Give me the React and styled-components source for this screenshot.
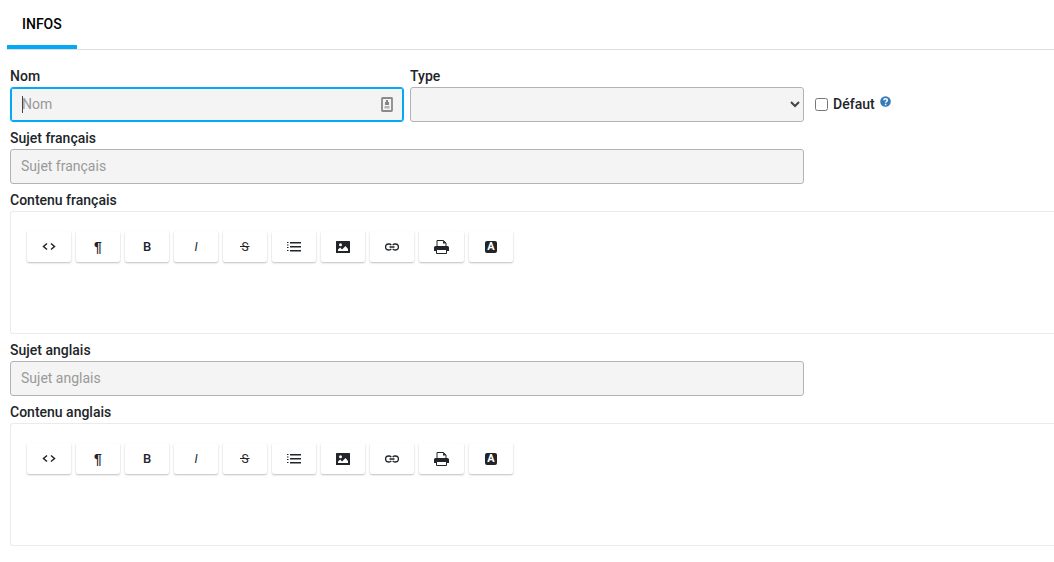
import React, { useState } from 'react';
import styled, { createGlobalStyle } from 'styled-components';

const GlobalStyle = createGlobalStyle`
    * {
        box-sizing: border-box;
    }

    body {
        margin: 0;
        overflow-x: hidden;
        background: #fff;
        color: #212529;
        font-family: Roboto, Arial, sans-serif;
        font-size: 14px;
        line-height: 20px;
    }

    input, select, button {
        font: inherit;
        color: inherit;
    }
`;

const Tabs = styled.nav`
    display: flex;
    margin-left: 7px;
    border-bottom: 1px solid #ddd;
`;

const Tab = styled.button`
    height: 49px;
    padding: 2px 15px 0;
    border: 0;
    border-bottom: 4px solid #03a9f4;
    background: none;
    color: #000;
    font-weight: 500;
`;

const Form = styled.form`
    display: grid;
    grid-template-columns: 21fr 21fr 13fr;
    gap: 6px;
    padding: 16px 0 16px 10px;
`;

const Field = styled.div`
    display: flex;
    flex-direction: column;
    min-width: 0;
    grid-column: span ${({ $span }) => $span || 1};
`;

const Label = styled.label`
    padding-bottom: 1px;
    font-weight: 500;
`;

const Input = styled.input`
    display: block;
    width: 100%;
    height: 35px;
    padding: 0 10px 2px;
    border: 1px solid #b3b3b3;
    border-radius: 3px;
    background: #f4f4f4;

    &::placeholder {
        color: #999;
        opacity: 1;
    }

    &:focus {
        border-color: #03a9f4;
        outline: 0;
        box-shadow: inset 0 0 0 1px #03a9f4;
    }
`;

const InputWrapper = styled.div`
    position: relative;

    ${Input} {
        padding-left: 11px;
        caret-color: transparent;
    }

    &:focus-within:has(input:placeholder-shown)::after {
        content: '';
        position: absolute;
        top: 9px;
        left: 12px;
        width: 1px;
        height: 17px;
        background: #444;
    }

    &:has(input:not(:placeholder-shown)) ${Input} {
        caret-color: auto;
    }

    svg {
        position: absolute;
        top: 10px;
        right: 11px;
    }
`;

const Select = styled.select`
    width: 100%;
    height: 35px;
    padding: 0 0 0 6px;
    border: 1px solid #b3b3b3;
    border-radius: 3px;
    background: #f4f4f4;
    color: #444;
`;

const CheckField = styled.div`
    display: flex;
    align-items: center;
    align-self: end;
    height: 35px;
    padding-left: 5px;

    input {
        width: 13px;
        height: 13px;
        margin: 0 5px 0 0;
    }

    label {
        padding-bottom: 1px;
        font-weight: 500;
    }
`;

const Help = styled.button`
    display: flex;
    height: 18px;
    padding: 0 0 4px;
    margin: 0 0 0 5px;
    border: 0;
    background: none;
`;

const EditorBox = styled.div`
    min-height: 123px;
    padding: 19px 16px;
    border: 1px solid #ebebeb;
    border-right: 0;
    border-radius: 3px 0 0 3px;
`;

const Toolbar = styled.div`
    display: flex;
    flex-wrap: wrap;
    gap: 5px;
`;

const ToolButton = styled.button`
    display: flex;
    align-items: center;
    justify-content: center;
    min-width: 44px;
    height: 31px;
    padding: 0 15px;
    border: 0;
    border-radius: 2px;
    background: #fff;
    box-shadow: 0 1px 2px rgba(0, 0, 0, 0.26);
    font-size: 12px;
    line-height: 16px;
`;

const Glyph = styled.span`
    font-family: ${({ $family }) => $family || 'Roboto'}, sans-serif;
    font-size: ${({ $size }) => $size || 12}px;
    font-weight: ${({ $weight }) => $weight || 400};
    font-style: ${({ $italic }) => ($italic ? 'italic' : 'normal')};
`;

const Strike = styled(Glyph)`
    padding: 0 1px;
    background: linear-gradient(#212529, #212529) center / 100% 1px no-repeat;
`;

const Letter = styled.span`
    width: 12px;
    height: 12px;
    border-radius: 2px;
    background: #212529;
    color: #fff;
    font-size: 11px;
    font-weight: 700;
    line-height: 12px;
    text-align: center;
`;

const CodeIcon = () => (
    <svg width="14" height="14" viewBox="0 0 14 14" fill="none" stroke="#212529" strokeWidth="1.5">
        <path d="M5 3.500 1.500 6.500 5 9.500M9 3.500l3.500 3L9 9.500" />
    </svg>
);

const ListIcon = () => (
    <svg width="14" height="14" viewBox="0 0 14 14" fill="#212529">
        <path d="M0 2h1.500v1H0zM0 4.500h1.500v1H0zM0 7h1.500v1H0zM0 10h1.500v1H0zM3 2h11v1.600H3zM3 6h11v1.600H3zM3 10h11v1.600H3z" />
    </svg>
);

const ImageIcon = () => (
    <svg width="14" height="12" viewBox="0 0 14 12">
        <rect width="14" height="12" rx="0.5" fill="#212529" />
        <circle cx="4.500" cy="3.700" r="1.500" fill="#fff" />
        <path d="M2 10V8.500L4.200 6.500 6 8.500 9.500 5 12 8v2z" fill="#fff" />
    </svg>
);

const LinkIcon = () => (
    <svg width="14" height="14" viewBox="0 0 14 14" fill="none" stroke="#212529" strokeWidth="1.300">
        <path d="M6.300 5.200A2.800 2.800 0 0 0 4 4H3.500a3 3 0 0 0 0 6H4a2.800 2.800 0 0 0 2.300-1.200M7.700 5.200A2.800 2.800 0 0 1 10 4h.5a3 3 0 0 1 0 6H10a2.800 2.800 0 0 1-2.300-1.200M4.500 7h5" />
    </svg>
);

const PrintIcon = () => (
    <svg width="15" height="14" viewBox="0 0 15 14">
        <path d="M3 6.500V.5h6.500L12 3v3.500" fill="#fff" stroke="#212529" />
        <path d="M9 .5 12 3.500H9z" fill="#212529" />
        <path d="M1.500 6h12A1.500 1.500 0 0 1 15 7.500V11H0V7.500A1.500 1.500 0 0 1 1.500 6z" fill="#212529" />
        <path d="M2.500 9.500h10v4h-10z" fill="#fff" stroke="#212529" />
    </svg>
);

const ContactIcon = () => (
    <svg width="12" height="15" viewBox="0 0 12 15">
        <rect x="1" y="1" width="10" height="13" rx="0.5" fill="#f4f4f4" stroke="#8b8b8b" strokeWidth="1.800" />
        <path d="M5 3h2v2h1v3H4V5h1z" fill="#858585" />
        <path d="M3.500 9h5v2.500h-5z" fill="#b5b5b5" />
    </svg>
);

const HelpIcon = () => (
    <svg width="11" height="11" viewBox="0 0 11 11">
        <circle cx="5.500" cy="5.500" r="5.300" fill="#337ab7" />
        <path d="M3.800 4.300c0-2.200 3.500-2.200 3.500 0 0 1.200-1.700 1.200-1.700 2.500" fill="none" stroke="#fff" strokeWidth="1.500" />
        <path d="M4.800 7.700h1.600v1.500H4.800z" fill="#fff" />
    </svg>
);

const tools = [
    { title: 'HTML', icon: <CodeIcon /> },
    { title: 'Format', icon: <Glyph $weight={700} $size={14} $family="'Liberation Sans'">¶</Glyph> },
    { title: 'Gras', icon: <Glyph $weight={500} $size={13}>B</Glyph> },
    { title: 'Italique', icon: <Glyph $italic>I</Glyph> },
    { title: 'Barré', icon: <Strike>S</Strike> },
    { title: 'Listes', icon: <ListIcon /> },
    { title: 'Image', icon: <ImageIcon /> },
    { title: 'Lien', icon: <LinkIcon /> },
    { title: 'Imprimer', icon: <PrintIcon /> },
    { title: 'Police', icon: <Letter>A</Letter> },
];

const Editor = ({ label }) => (
    <Field $span={3}>
        <Label as="span">{label}</Label>
        <EditorBox role="group" aria-label={label}>
            <Toolbar>
                {tools.map(tool => (
                    <ToolButton key={tool.title} type="button" aria-label={tool.title}>
                        {tool.icon}
                    </ToolButton>
                ))}
            </Toolbar>
        </EditorBox>
    </Field>
);

const TextField = ({ id, label }) => (
    <Field $span={2}>
        <Label htmlFor={id}>{label}</Label>
        <Input id={id} placeholder={label} />
    </Field>
);

const App = () => {
    const [isDefault, setIsDefault] = useState(false);

    return (
        <>
            <GlobalStyle />
            <Tabs>
                <Tab type="button">INFOS</Tab>
            </Tabs>
            <Form>
                <Field>
                    <Label htmlFor="nom">Nom</Label>
                    <InputWrapper>
                        <Input id="nom" placeholder="Nom" autoFocus />
                        <ContactIcon />
                    </InputWrapper>
                </Field>
                <Field>
                    <Label htmlFor="type">Type</Label>
                    <Select id="type" defaultValue="">
                        <option value="" />
                    </Select>
                </Field>
                <CheckField>
                    <input
                        id="defaut"
                        type="checkbox"
                        checked={isDefault}
                        onChange={e => setIsDefault(e.target.checked)}
                    />
                    <label htmlFor="defaut">Défaut</label>
                    <Help type="button" aria-label="Aide">
                        <HelpIcon />
                    </Help>
                </CheckField>
                <TextField id="sujet-fr" label="Sujet français" />
                <Editor label="Contenu français" />
                <TextField id="sujet-en" label="Sujet anglais" />
                <Editor label="Contenu anglais" />
            </Form>
        </>
    );
};

export default App;
